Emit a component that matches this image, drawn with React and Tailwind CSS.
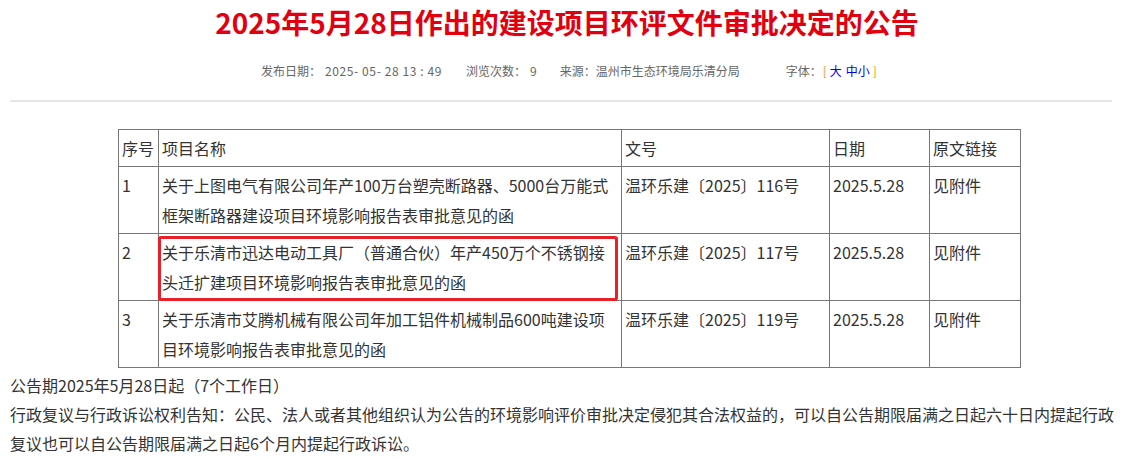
export default function App() {
  const font = { fontFamily: '"Noto Sans CJK SC", "Noto Sans", sans-serif' };
  const rows = [
    {
      no: "1",
      name: ["关于上图电气有限公司年产100万台塑壳断路器、5000台万能式", "框架断路器建设项目环境影响报告表审批意见的函"],
      doc: "温环乐建〔2025〕116号",
      date: "2025.5.28",
      link: "见附件",
    },
    {
      no: "2",
      name: ["关于乐清市迅达电动工具厂（普通合伙）年产450万个不锈钢接", "头迁扩建项目环境影响报告表审批意见的函"],
      doc: "温环乐建〔2025〕117号",
      date: "2025.5.28",
      link: "见附件",
      hl: true,
    },
    {
      no: "3",
      name: ["关于乐清市艾腾机械有限公司年加工铝件机械制品600吨建设项", "目环境影响报告表审批意见的函"],
      doc: "温环乐建〔2025〕119号",
      date: "2025.5.28",
      link: "见附件",
    },
  ];
  const cell = "border border-[#777] px-[3px] py-[3px] align-top leading-[30px] text-left font-normal";
  return (
    <div className="w-[1122px] h-[459px] overflow-hidden bg-white text-[#333]" style={font}>
      <h1 className="pl-[12px] h-[44px] leading-[44px] text-center text-[28px] font-bold text-[#e2000f] whitespace-nowrap">
        2025年5月28日作出的建设项目环评文件审批决定的公告
      </h1>
      <div className="mt-[17px] h-[20px] leading-[20px] pl-[261px] flex text-[12px] text-[#666] whitespace-nowrap">
        <span>发布日期：</span>
        <span className="ml-[4px] tracking-[0.6px]">2025- 05- 28 13 : 49</span>
        <span className="ml-[24px]">浏览次数：</span>
        <span className="ml-[4px]">9</span>
        <span className="ml-[23px]">来源：温州市生态环境局乐清分局</span>
        <span className="ml-[46px]">字体：</span>
        <span className="ml-[1px] text-[#f39800]">[</span>
        <span className="ml-[3px] text-[#0000ee]">大</span>
        <span className="ml-[4px] text-[#0000ee]">中小</span>
        <span className="ml-[3px] text-[#f39800]">]</span>
      </div>
      <div className="mt-[19px] mx-[10px] h-[2px] bg-[#e6e6e6]" />
      <table className="mt-[27px] ml-[118px] w-[902px] table-fixed border-collapse text-[16px]">
        <colgroup>
          <col className="w-[40px]" />
          <col className="w-[463px]" />
          <col className="w-[208px]" />
          <col className="w-[100px]" />
          <col className="w-[91px]" />
        </colgroup>
        <thead>
          <tr>
            <th className={cell + " whitespace-nowrap"}>序号</th>
            <th className={cell}>项目名称</th>
            <th className={cell}>文号</th>
            <th className={cell}>日期</th>
            <th className={cell}>原文链接</th>
          </tr>
        </thead>
        <tbody>
          {rows.map((r) => (
            <tr key={r.no}>
              <td className={cell}>{r.no}</td>
              <td className={cell + " relative whitespace-nowrap"}>
                {r.name[0]}
                <br />
                {r.name[1]}
                {r.hl && (
                  <div className="absolute left-[-1px] top-[2px] right-[3px] bottom-[-1px] border-[3px] border-[#e8202a] rounded-[3px]" />
                )}
              </td>
              <td className={cell + " whitespace-nowrap"}>{r.doc}</td>
              <td className={cell}>{r.date}</td>
              <td className={cell}>{r.link}</td>
            </tr>
          ))}
        </tbody>
      </table>
      <div className="mt-[3px] px-[10px] text-[16px] leading-[29px] whitespace-nowrap">
        <p>公告期2025年5月28日起（7个工作日）</p>
        <p>行政复议与行政诉讼权利告知：公民、法人或者其他组织认为公告的环境影响评价审批决定侵犯其合法权益的，可以自公告期限届满之日起六十日内提起行政</p>
        <p>复议也可以自公告期限届满之日起6个月内提起行政诉讼。</p>
      </div>
    </div>
  );
}
